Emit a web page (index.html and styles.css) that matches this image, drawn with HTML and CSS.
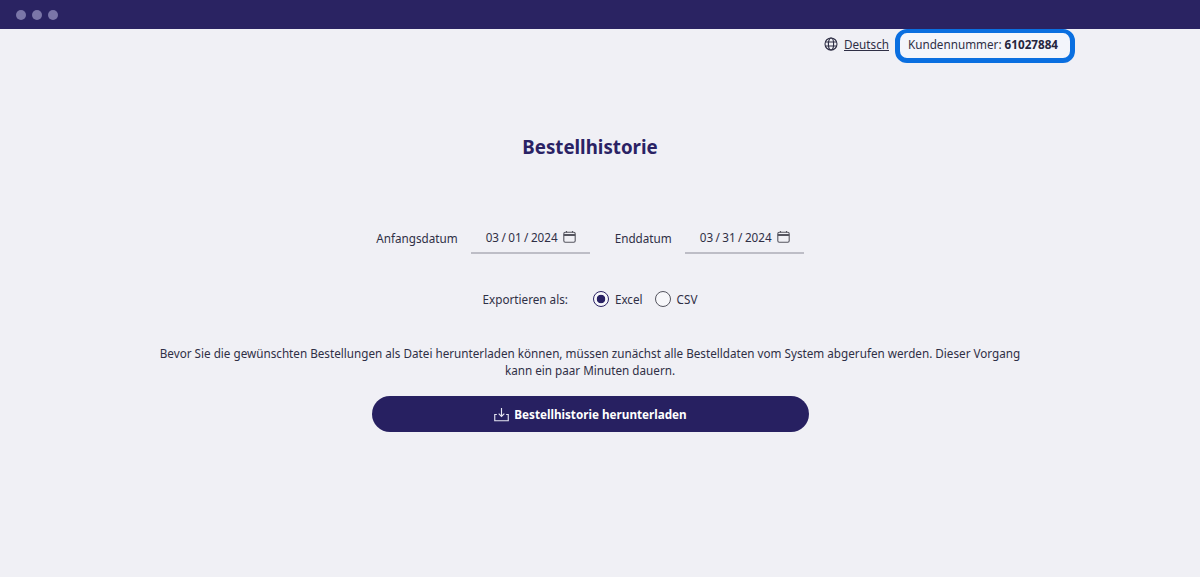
FILE: index.html
```html
<!DOCTYPE html>
<html lang="de">

<head>
  <meta charset="UTF-8">
  <title>Bestellhistorie</title>
  <link rel="stylesheet" href="styles.css">
</head>

<body>
  <div class="window-bar">
    <span class="dot"></span>
    <span class="dot"></span>
    <span class="dot"></span>
  </div>

  <div class="account-row">
    <svg class="globe" width="14" height="14" viewBox="0 0 14 14" fill="none" stroke="#2f2f45" stroke-width="1.1">
      <circle cx="7" cy="7" r="6"/>
      <ellipse cx="7" cy="7" rx="2.6" ry="6"/>
      <path d="M1.4 5h11.2M1.4 9h11.2"/>
    </svg>
    <a class="lang-link" href="#">Deutsch</a>
    <div class="customer-box"><span>Kundennummer: <strong>61027884</strong></span></div>
  </div>

  <div class="container">
    <h1 class="title">Bestellhistorie</h1>

    <div class="date-row">
      <label class="date-label">Anfangsdatum</label>
      <div class="date-field">
        <span class="date-value">03 / 01 / 2024</span>
        <svg width="13" height="12" viewBox="0 0 13 12" fill="none" stroke="#55555f" stroke-width="1.1">
          <rect x="0.8" y="1.2" width="11.4" height="10" rx="1.5"/>
          <path d="M0.8 3.6h11.4M0.8 4.4h11.4M3.5 0v1.5M9.5 0v1.5"/>
        </svg>
      </div>
      <label class="date-label end-label">Enddatum</label>
      <div class="date-field">
        <span class="date-value">03 / 31 / 2024</span>
        <svg width="13" height="12" viewBox="0 0 13 12" fill="none" stroke="#55555f" stroke-width="1.1">
          <rect x="0.8" y="1.2" width="11.4" height="10" rx="1.5"/>
          <path d="M0.8 3.6h11.4M0.8 4.4h11.4M3.5 0v1.5M9.5 0v1.5"/>
        </svg>
      </div>
    </div>

    <div class="export-row">
      <span class="export-label">Exportieren als:</span>
      <span class="radio radio-on"></span>
      <span class="radio-text">Excel</span>
      <span class="radio"></span>
      <span class="radio-text">CSV</span>
    </div>

    <p class="info">Bevor Sie die gewünschten Bestellungen als Datei herunterladen können, müssen zunächst alle Bestelldaten vom System abgerufen werden. Dieser Vorgang kann ein paar Minuten dauern.</p>

    <button class="download-btn">
      <svg width="15" height="15" viewBox="0 0 16 15" fill="none" stroke="#e6e6f2" stroke-width="1.2">
        <path d="M8 0.5v9M5 6.6l3 3 3-3"/>
        <path d="M3 7.5H0.8v6.7h14.4V7.5H13"/>
      </svg>
      Bestellhistorie herunterladen
    </button>
  </div>
</body>

</html>
```

FILE: styles.css
```css
* {
  box-sizing: border-box;
  margin: 0;
  padding: 0;
}

body {
  background-color: #f0f0f5;
  color: #2f2f45;
  font-family: "Noto Sans", "Open Sans", sans-serif;
  font-size: 11.7px;
  height: 577px;
  overflow: hidden;
}

.window-bar {
  height: 29px;
  background-color: #2a2362;
  display: flex;
  align-items: center;
  gap: 6px;
  padding: 0 0 0 16px;
}

.dot {
  width: 10px;
  height: 10px;
  border-radius: 50%;
  background-color: #7b76a8;
}

.account-row {
  display: flex;
  justify-content: flex-end;
  align-items: flex-start;
  height: 34px;
  padding-right: 125px;
}

.globe {
  margin: 8px 6px 0 0;
}

.lang-link {
  color: #2f2f45;
  line-height: 31px;
  margin-right: 6px;
}

.customer-box {
  width: 180px;
  height: 34px;
  border: 5px solid #0a6fe0;
  border-top-width: 4px;
  border-radius: 12px;
  padding: 0 0 3px 8px;
  display: flex;
  align-items: center;
  background-color: #f3f5fb;
}

.customer-box strong {
  color: #25253d;
}

.container {
  width: 880px;
  margin-left: 150px;
  text-align: center;
}

.title {
  font-family: "Noto Sans", sans-serif;
  font-size: 18.7px;
  font-weight: 700;
  color: #2a2264;
  line-height: 26px;
  margin-top: 71px;
}

.date-row {
  display: flex;
  justify-content: center;
  align-items: center;
  margin-top: 62px;
  height: 32px;
}

.date-label {
  margin-right: 13px;
}

.end-label {
  margin-left: 25px;
}

.date-field {
  width: 119px;
  height: 32px;
  border-bottom: 2px solid #bdbdc6;
  display: flex;
  align-items: center;
  gap: 5px;
  padding-left: 15px;
}

.date-value {
  word-spacing: -0.6px;
}

.export-row {
  display: flex;
  justify-content: center;
  align-items: center;
  margin-top: 35px;
  height: 20px;
}

.export-label {
  margin-right: 25px;
}

.radio {
  width: 16px;
  height: 16px;
  border: 1px solid #55555f;
  border-radius: 50%;
  background-color: #f7f7fa;
  margin-right: 6px;
}

.radio-on {
  border: 1.5px solid #2a2264;
  background: radial-gradient(circle, #2a2264 0, #2a2264 4px, #f7f7fa 4.6px);
}

.radio-text {
  margin-right: 12px;
}

.radio-text:last-child {
  margin-right: 0;
}

.info {
  margin-top: 36px;
  line-height: 17px;
}

.download-btn {
  display: flex;
  align-items: center;
  justify-content: center;
  gap: 5px;
  width: 437px;
  height: 36px;
  margin: 17px 0 0 222px;
  border: none;
  border-radius: 18px;
  background-color: #272061;
  color: #ffffff;
  font-family: "Noto Sans", sans-serif;
  font-size: 11.7px;
  font-weight: 700;
}
```
